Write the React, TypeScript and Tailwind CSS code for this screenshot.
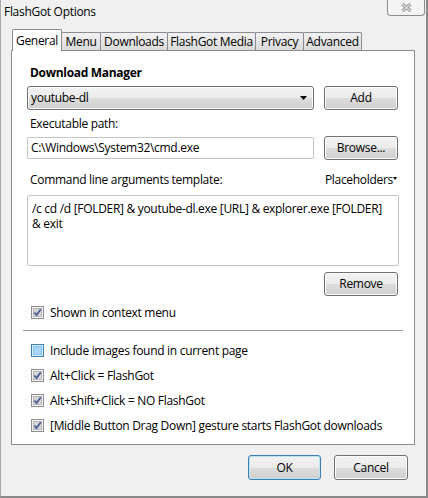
import React from 'react';

const font = { fontFamily: '"Open Sans", "Noto Sans", sans-serif' };

const Button = ({ label, w = 'w-[74px]', primary = false }: { label: string; w?: string; primary?: boolean }) => (
    <div
        className={`${w} h-[24px] rounded-[3px] border ${primary ? 'border-[#3c7fb1] shadow-[inset_0_0_0_1px_#b9e3f9]' : 'border-[#707070] shadow-[inset_0_0_0_1px_#fcfcfc]'} bg-[linear-gradient(to_bottom,#f2f2f2_0%,#ebebeb_50%,#dddddd_51%,#cfcfcf_100%)] flex items-center justify-center text-black`}
    >
        {label}
    </div>
);

const CheckBox = ({ checked, hot = false }: { checked: boolean; hot?: boolean }) => (
    <svg width="13" height="13" viewBox="0 0 13 13" className="shrink-0">
        <rect x="0.5" y="0.5" width="12" height="12" fill={hot ? '#deedf9' : '#f4f4f4'} stroke={hot ? '#3c7fb1' : '#8f8f8f'} />
        <rect x="2.5" y="2.5" width="8" height="8" fill={hot ? '#a9d6f6' : '#d6d6d6'} stroke={hot ? '#79c6f9' : '#b8b8b8'} />
        {checked && <path d="M3.5 6.5 L5.5 9 L9.8 3.2" fill="none" stroke="#4a5f97" strokeWidth="1.8" />}
    </svg>
);

const CheckRow = ({ label, checked, hot }: { label: string; checked: boolean; hot?: boolean }) => (
    <div className="flex items-center gap-[6px] h-[25px] pl-[8px]">
        <CheckBox checked={checked} hot={hot} />
        <span className="whitespace-nowrap">{label}</span>
    </div>
);

const tabs = [
    { name: 'Menu', w: 'w-[40px]' },
    { name: 'Downloads', w: 'w-[68px]' },
    { name: 'FlashGot Media', w: 'w-[89px]' },
    { name: 'Privacy', w: 'w-[49px]' },
    { name: 'Advanced', w: 'w-[59px]' },
];

const App = () => {
    return (
        <div style={font} className="w-[428px] h-[498px] bg-[#f0f0f0] text-[12px] tracking-[-0.3px] text-black border-l border-l-[#a8a8a8] border-r-2 border-r-[#8a8a8a] border-b-2 border-b-[#8a8a8a] flex flex-col overflow-hidden">
            {/* Title bar */}
            <div className="h-[21px] flex justify-between items-start shrink-0">
                <span className="pl-[3px] pt-[3px] leading-[18px]">FlashGot Options</span>
                <div className="w-[38px] h-[16px] mr-[1px] border border-t-0 border-[#8d8d8d] rounded-b-[4px] bg-[#f4f4f4] flex items-center justify-center">
                    <svg width="11" height="9" viewBox="0 0 11 9">
                        <path d="M1.5 1 L9.5 8 M9.5 1 L1.5 8" stroke="#8a8a8a" strokeWidth="3" />
                        <path d="M1.5 1 L9.5 8 M9.5 1 L1.5 8" stroke="#e6e6e6" strokeWidth="1.2" />
                    </svg>
                </div>
            </div>

            {/* Client area */}
            <div className="flex-1 flex flex-col pl-[10px] pr-[12px] pt-[8px]">
                {/* Tabs */}
                <div className="flex items-end h-[21px] pl-[1px] relative z-10">
                    <div className="w-[50px] h-[22px] -mb-[1px] bg-white border border-b-0 border-[#898c95] rounded-t-[2px] flex items-start justify-center pt-[2px]">
                        General
                    </div>
                    {tabs.map((t) => (
                        <div
                            key={t.name}
                            className={`${t.w} h-[18px] -ml-[1px] first:ml-0 border border-b-0 border-[#898c95] rounded-t-[2px] bg-[linear-gradient(to_bottom,#f2f2f2,#dadada)] flex items-center justify-center`}
                        >
                            {t.name}
                        </div>
                    ))}
                </div>

                {/* Panel */}
                <div className="w-[404px] h-[395px] bg-white border border-[#898c95] px-[15px] pt-[14px]">
                    <div className="font-bold pl-[3px] leading-[16px]">Download Manager</div>

                    <div className="flex justify-between mt-[5px] pr-[1px]">
                        <div className="w-[287px] h-[24px] rounded-[3px] border border-[#707070] shadow-[inset_0_0_0_1px_#fcfcfc] bg-[linear-gradient(to_bottom,#f2f2f2_0%,#ebebeb_50%,#dddddd_51%,#cfcfcf_100%)] flex items-center justify-between pl-[3px] pr-[6px]">
                            <span>youtube-dl</span>
                            <svg width="7" height="4" viewBox="0 0 7 4">
                                <path d="M0 0 H7 L3.5 4 Z" fill="#000" />
                            </svg>
                        </div>
                        <Button label="Add" />
                    </div>

                    <div className="pl-[3px] mt-[6px] leading-[16px]">Executable path:</div>

                    <div className="flex justify-between items-center mt-[4px] pr-[1px]">
                        <div className="w-[287px] h-[22px] border border-[#c5c5c5] rounded-[2px] bg-white flex items-center pl-[3px]">
                            C:\Windows\System32\cmd.exe
                        </div>
                        <Button label="Browse..." />
                    </div>

                    <div className="flex justify-between items-end mt-[12px] pl-[3px] pr-[1px] leading-[16px]">
                        <span>Command line arguments template:</span>
                        <span className="flex items-start pr-[1px]">
                            Placeholders
                            <svg width="4" height="3" viewBox="0 0 4 3" className="mt-[5px]">
                                <path d="M0 0 H4 L2 3 Z" fill="#000" />
                            </svg>
                        </span>
                    </div>

                    <div className="mt-[7px] h-[71px] border border-[#c5c5c5] rounded-[2px] bg-white pl-[4px] pr-[8px] pt-[5px] leading-[15px]">
                        /c cd /d [FOLDER] &amp; youtube-dl.exe [URL] &amp; explorer.exe [FOLDER] &amp; exit
                    </div>

                    <div className="flex justify-end mt-[6px] pr-[1px]">
                        <Button label="Remove" />
                    </div>

                    <div className="-ml-[4px] mt-[4px]">
                        <CheckRow label="Shown in context menu" checked />
                    </div>

                    <div className="h-px bg-[#a0a0a0] -mx-[4px] mt-[5px] mb-[7px]" />

                    <div className="-ml-[4px]">
                        <CheckRow label="Include images found in current page" checked={false} hot />
                        <CheckRow label="Alt+Click = FlashGot" checked />
                        <CheckRow label="Alt+Shift+Click = NO FlashGot" checked />
                        <CheckRow label="[Middle Button Drag Down] gesture starts FlashGot downloads" checked />
                    </div>
                </div>

                {/* Dialog buttons */}
                <div className="flex justify-end gap-[13px] mt-[10px] pr-[6px]">
                    <Button label="OK" w="w-[73px] !h-[25px]" primary />
                    <Button label="Cancel" w="w-[74px] !h-[25px]" />
                </div>
            </div>
        </div>
    );
};

export default App;
